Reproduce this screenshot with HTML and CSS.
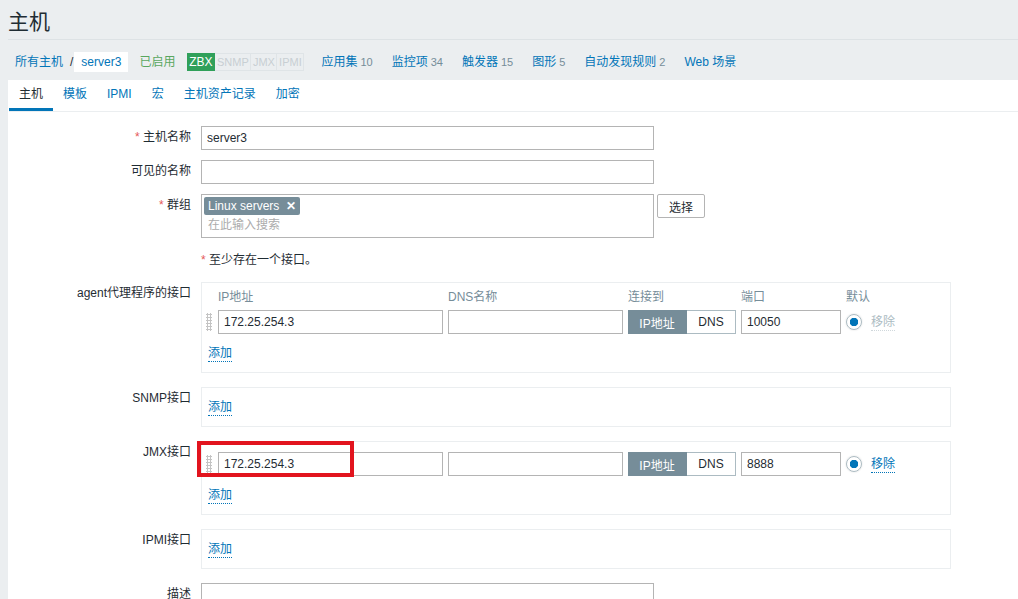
FILE: index.html
```html
<!DOCTYPE html>
<html lang="zh-CN">
<head>
<meta charset="utf-8">
<title>主机</title>
<link rel="stylesheet" href="styles.css">
</head>
<body>
<header class="page-header"><h1>主机</h1></header>
<nav class="host-nav">
  <a class="crumb" href="#">所有主机</a><span class="crumb-sep">/</span><a class="crumb crumb-current" href="#">server3</a>
  <span class="status-on">已启用</span>
  <span class="avail"><span class="av av-on">ZBX</span><span class="av av-snmp">SNMP</span><span class="av av-jmx">JMX</span><span class="av av-ipmi">IPMI</span></span>
  <a class="nav-item" href="#">应用集<span class="count">10</span></a>
  <a class="nav-item" href="#">监控项<span class="count">34</span></a>
  <a class="nav-item" href="#">触发器<span class="count">15</span></a>
  <a class="nav-item" href="#">图形<span class="count">5</span></a>
  <a class="nav-item" href="#">自动发现规则<span class="count">2</span></a>
  <a class="nav-item" href="#">Web 场景</a>
</nav>
<main class="panel">
  <ul class="tabs">
    <li class="tab active">主机</li>
    <li class="tab">模板</li>
    <li class="tab">IPMI</li>
    <li class="tab">宏</li>
    <li class="tab">主机资产记录</li>
    <li class="tab">加密</li>
  </ul>
  <form class="form">
    <div class="row">
      <label class="lbl"><span class="req">*</span> 主机名称</label>
      <div class="field"><input class="inp w453" type="text" value="server3"></div>
    </div>
    <div class="row">
      <label class="lbl">可见的名称</label>
      <div class="field"><input class="inp w453" type="text" value=""></div>
    </div>
    <div class="row">
      <label class="lbl"><span class="req">*</span> 群组</label>
      <div class="field field-inline">
        <div class="multiselect">
          <span class="chip">Linux servers <b class="chip-x">✕</b></span>
          <div class="ms-placeholder">在此输入搜索</div>
        </div>
        <button class="btn" type="button">选择</button>
      </div>
    </div>
    <div class="row">
      <div class="lbl"></div>
      <div class="field note"><span class="req">*</span> 至少存在一个接口。</div>
    </div>
    <div class="row row-box">
      <label class="lbl">agent代理程序的接口</label>
      <div class="field">
        <div class="iface-box">
          <div class="iface-grid iface-head">
            <span></span><span>IP地址</span><span>DNS名称</span><span>连接到</span><span>端口</span><span class="span2">默认</span>
          </div>
          <div class="iface-grid">
            <span class="drag"></span>
            <input class="inp" type="text" value="172.25.254.3">
            <input class="inp" type="text" value="">
            <span class="toggle"><span class="tg tg-on">IP地址</span><span class="tg">DNS</span></span>
            <input class="inp" type="text" value="10050">
            <span class="radio"></span>
            <span class="remove disabled">移除</span>
          </div>
          <div class="iface-add"><a class="link" href="#">添加</a></div>
        </div>
      </div>
    </div>
    <div class="row row-box">
      <label class="lbl">SNMP接口</label>
      <div class="field">
        <div class="iface-box">
          <div class="iface-add first"><a class="link" href="#">添加</a></div>
        </div>
      </div>
    </div>
    <div class="row row-box">
      <label class="lbl">JMX接口</label>
      <div class="field">
        <div class="iface-box marked">
          <div class="iface-grid first">
            <span class="drag"></span>
            <input class="inp" type="text" value="172.25.254.3">
            <input class="inp" type="text" value="">
            <span class="toggle"><span class="tg tg-on">IP地址</span><span class="tg">DNS</span></span>
            <input class="inp" type="text" value="8888">
            <span class="radio"></span>
            <a class="remove link" href="#">移除</a>
          </div>
          <div class="iface-add"><a class="link" href="#">添加</a></div>
          <span class="highlight"></span>
        </div>
      </div>
    </div>
    <div class="row row-box">
      <label class="lbl">IPMI接口</label>
      <div class="field">
        <div class="iface-box">
          <div class="iface-add first"><a class="link" href="#">添加</a></div>
        </div>
      </div>
    </div>
    <div class="row">
      <label class="lbl">描述</label>
      <div class="field"><textarea class="inp w453 ta"></textarea></div>
    </div>
  </form>
</main>
</body>
</html>
```
FILE: styles.css
```css
* { box-sizing: border-box; }
html, body { margin: 0; padding: 0; }
body {
  background: #ebeef0;
  color: #1f2c33;
  font-family: "Liberation Sans", Arial, "Noto Sans CJK SC", sans-serif;
  font-size: 12px;
  padding-left: 8px;
  overflow: hidden;
  height: 599px;
}
a { color: #0275b8; text-decoration: none; }

.page-header {
  padding-top: 4px;
  height: 40px;
  border-bottom: 1px solid #dde2e5;
}
.page-header h1 {
  margin: 0;
  font-size: 21px;
  line-height: 35px;
  font-weight: normal;
  color: #1f2c33;
}

.host-nav {
  display: flex;
  align-items: center;
  height: 40px;
  padding: 12px 0 8px;
  line-height: 20px;
  white-space: nowrap;
}
.crumb { padding: 0 7px; }
.crumb-sep { color: #1f2c33; }
.crumb-current { background: #fff; margin-left: 1px; }
.status-on { color: #59a75f; margin-left: 11px; }
.avail { display: inline-flex; margin-left: 12px; line-height: 16px; }
.av {
  text-align: center;
  border: 1px solid #dfe4e7;
  border-left: none;
  color: #c8cfd3;
  font-size: 11px;
}
.av-on {
  width: 28px;
  background: #30a05a;
  border-color: #30a05a;
  color: #fff;
  font-size: 12px;
}
.av-snmp { width: 36px; }
.av-jmx { width: 26px; }
.av-ipmi { width: 27px; }
.nav-item { margin-left: 17px; }
.nav-item + .nav-item { margin-left: 19px; }
.count { color: #768d99; font-size: 11px; margin-left: 3px; }

.panel {
  background: #fff;
  height: 600px;
  padding-left: 1px;
}
.tabs {
  list-style: none;
  margin: 0;
  padding: 0;
  display: flex;
  border-bottom: 1px solid #ebeef0;
}
.tab {
  padding: 0 10px;
  line-height: 28px;
  border-bottom: 3px solid transparent;
  color: #0275b8;
}
.tab.active { color: #1f2c33; border-bottom-color: #0275b8; }

.form { padding-top: 14px; }
.row {
  display: flex;
  margin-bottom: 10px;
}
.row-box { margin-bottom: 14px; }
.lbl {
  width: 182px;
  flex: none;
  text-align: right;
  line-height: 22px;
  margin-right: 10px;
  white-space: nowrap;
}
.req { color: #e45959; }
.field { flex: none; }
.field-inline { display: flex; align-items: flex-start; }
.note { line-height: 24px; }

.inp {
  height: 24px;
  border: 1px solid #b4b4b4;
  background: #fff;
  padding: 0 5px;
  font: inherit;
  color: #1f2c33;
  margin: 0;
  display: block;
}
.w453 { width: 453px; }
.ta { height: 60px; resize: none; }

.multiselect {
  width: 453px;
  height: 44px;
  border: 1px solid #b4b4b4;
  padding: 2px 2px 0;
}
.chip {
  display: inline-block;
  background: #768d99;
  color: #fff;
  line-height: 18px;
  padding: 0 4px;
  border-radius: 2px;
}
.chip-x { margin-left: 3px; font-weight: bold; }
.ms-placeholder { color: #acacac; line-height: 20px; padding-left: 4px; }
.btn {
  margin-left: 3px;
  width: 48px;
  height: 24px;
  background: #fff;
  border: 1px solid #b4b4b4;
  border-radius: 2px;
  font: inherit;
  color: #1f2c33;
  padding: 0;
}

.iface-box {
  position: relative;
  width: 750px;
  border: 1px solid #ebeef0;
  padding: 5px 5px 9px;
}
.iface-grid {
  display: grid;
  grid-template-columns: 6px 225px 175px 108px 100px 16px auto;
  column-gap: 5px;
  align-items: center;
}
.iface-grid .inp { width: 100%; }
.iface-head { color: #768d99; line-height: 16px; margin: 1px 0 5px; }
.iface-grid.first { margin-top: 5px; }
.span2 { grid-column: span 2; }
.drag {
  width: 6px;
  height: 18px;
  background-image: radial-gradient(circle, #c4c4c4 1px, transparent 1.2px);
  background-size: 3px 3px;
  margin-left: -1px;
}
.toggle { display: flex; height: 24px; width: 108px; margin-right: -1px; }
.tg {
  display: flex;
  align-items: center;
  justify-content: center;
  width: 49px;
  border: 1px solid #acbbc2;
  border-left: none;
  color: #1f2c33;
}
.tg-on {
  width: 59px;
  background: #768d99;
  border-color: #768d99;
  color: #fff;
}
.radio {
  width: 16px;
  height: 16px;
  border-radius: 50%;
  border: 1px solid #acbbc2;
  background: radial-gradient(circle, #0275b8 0 4px, #fff 4.5px);
  box-shadow: 0 0 2px rgba(0,0,0,0.15);
}
.remove { margin-left: 4px; justify-self: start; }
.disabled { color: #acbbc2; border-bottom: 1px dotted #d0d8dc; line-height: 16px; }
.link { border-bottom: 1px dotted #0275b8; line-height: 16px; display: inline-block; }
.iface-add { margin-top: 9px; line-height: 20px; padding-left: 1px; }
.iface-add.first { margin-top: 4px; }
.highlight {
  position: absolute;
  left: -5px;
  top: -1px;
  width: 157px;
  height: 36px;
  border: 4px solid #e2141e;
  pointer-events: none;
}
```
